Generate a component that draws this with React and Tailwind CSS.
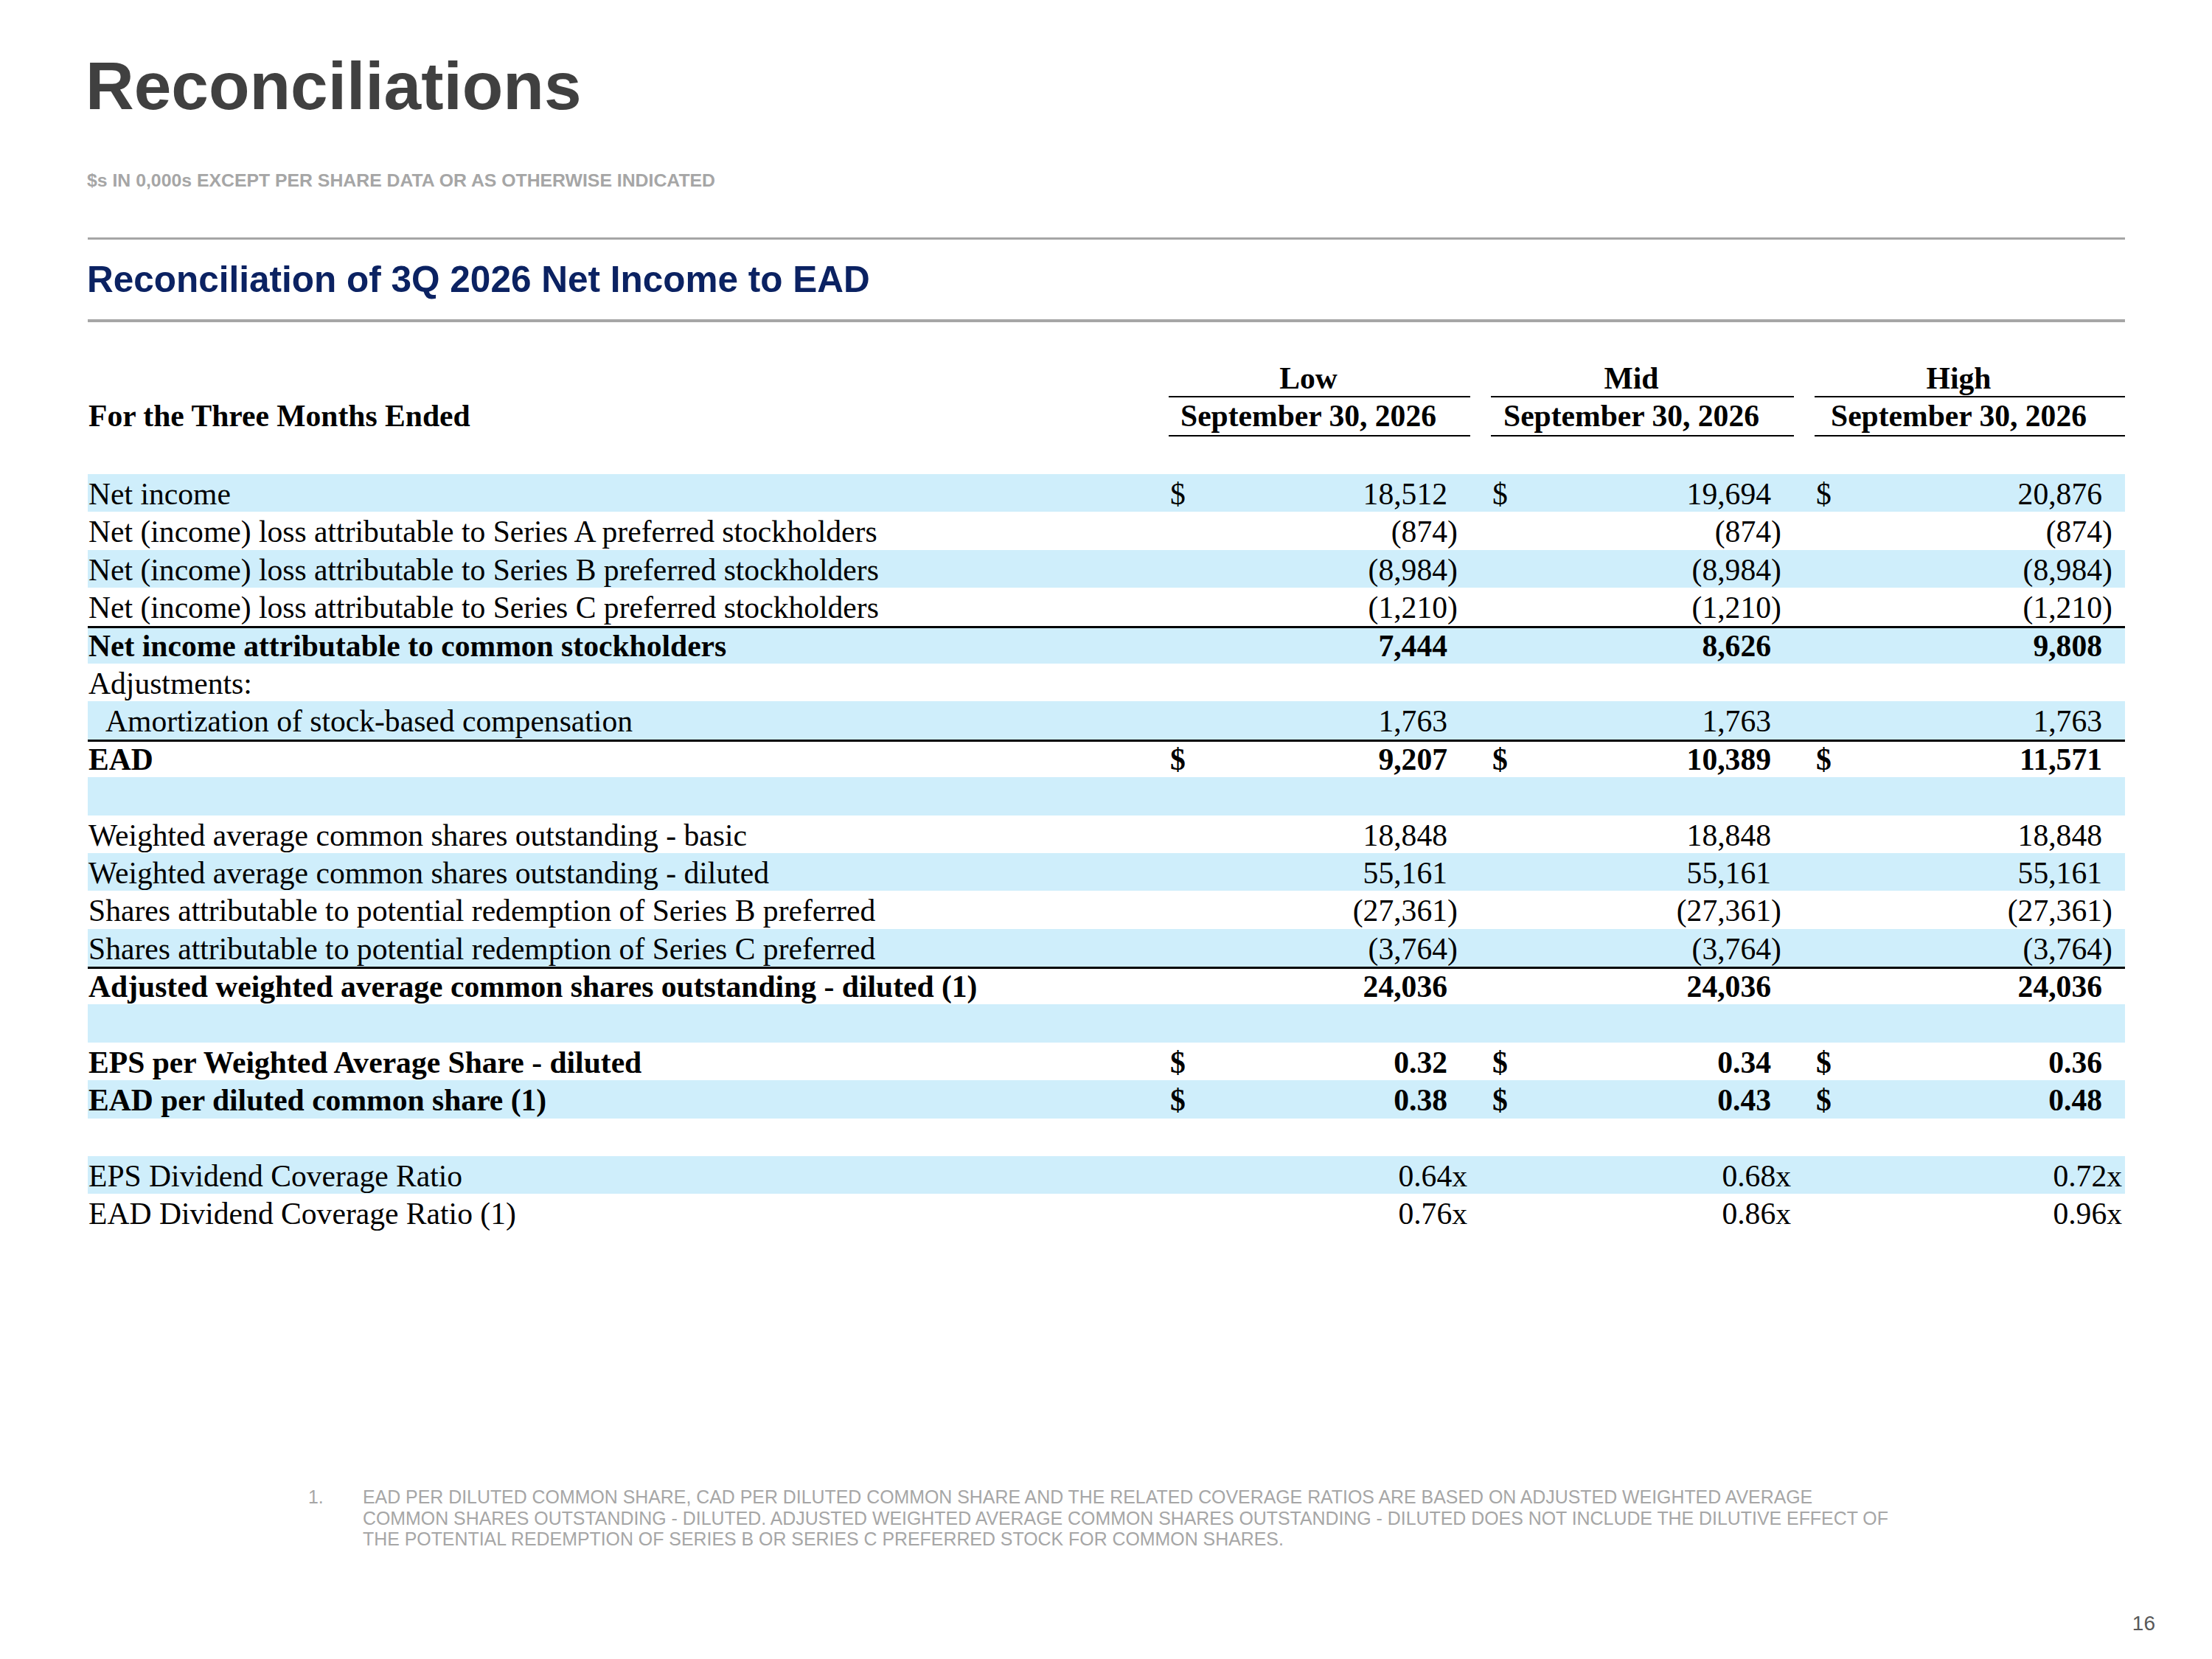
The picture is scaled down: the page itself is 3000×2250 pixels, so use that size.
import React from 'react';

const serif = { fontFamily: '"Liberation Serif", "Times New Roman", serif' };

const rows = [
  { label: 'Net income', shade: true, dollar: true, v: ['18,512', '19,694', '20,876'] },
  { label: 'Net (income) loss attributable to Series A preferred stockholders', v: ['(874)', '(874)', '(874)'] },
  { label: 'Net (income) loss attributable to Series B preferred stockholders', shade: true, v: ['(8,984)', '(8,984)', '(8,984)'] },
  { label: 'Net (income) loss attributable to Series C preferred stockholders', v: ['(1,210)', '(1,210)', '(1,210)'] },
  { label: 'Net income attributable to common stockholders', shade: true, bold: true, line: true, v: ['7,444', '8,626', '9,808'] },
  { label: 'Adjustments:', v: [] },
  { label: 'Amortization of stock-based compensation', shade: true, indent: true, v: ['1,763', '1,763', '1,763'] },
  { label: 'EAD', bold: true, dollar: true, line: true, v: ['9,207', '10,389', '11,571'] },
  { label: '', shade: true, v: [] },
  { label: 'Weighted average common shares outstanding - basic', v: ['18,848', '18,848', '18,848'] },
  { label: 'Weighted average common shares outstanding - diluted', shade: true, v: ['55,161', '55,161', '55,161'] },
  { label: 'Shares attributable to potential redemption of Series B preferred', v: ['(27,361)', '(27,361)', '(27,361)'] },
  { label: 'Shares attributable to potential redemption of Series C preferred', shade: true, v: ['(3,764)', '(3,764)', '(3,764)'] },
  { label: 'Adjusted weighted average common shares outstanding - diluted (1)', bold: true, line: true, v: ['24,036', '24,036', '24,036'] },
  { label: '', shade: true, v: [] },
  { label: 'EPS per Weighted Average Share - diluted', bold: true, dollar: true, v: ['0.32', '0.34', '0.36'] },
  { label: 'EAD per diluted common share (1)', bold: true, dollar: true, shade: true, v: ['0.38', '0.43', '0.48'] },
  { label: '', v: [] },
  { label: 'EPS Dividend Coverage Ratio', shade: true, ratio: true, v: ['0.64x', '0.68x', '0.72x'] },
  { label: 'EAD Dividend Coverage Ratio (1)', ratio: true, v: ['0.76x', '0.86x', '0.96x'] },
];

const gridCols = 'grid grid-cols-[1466px_409px_28px_411px_28px_421px]';

const ValueCell = ({ value, dollar, ratio }) => {
  if (value === undefined) return <div />;
  if (ratio) {
    return <div className="text-right pr-[4px]">{value}</div>;
  }
  const neg = value.startsWith('(');
  const num = neg ? value.slice(0, -1) : value;
  return (
    <div className="flex justify-between pl-[2px] pr-[16px]">
      <span>{dollar ? '$' : ''}</span>
      <span>
        {num}
        <span className="inline-block w-[15px]">{neg ? ')' : ''}</span>
      </span>
    </div>
  );
};

const Row = ({ row }) => (
  <div
    className={`${gridCols} h-[51.4px] leading-[54px] whitespace-nowrap ${row.shade ? 'bg-[#cfeefb]' : ''} ${row.line ? 'shadow-[inset_0_3px_0_0_#000]' : ''} ${row.bold ? 'font-bold' : ''}`}
  >
    <div className={row.indent ? 'pl-[24px]' : 'pl-[1px]'}>{row.label}</div>
    <ValueCell value={row.v[0]} dollar={row.dollar} ratio={row.ratio} />
    <div />
    <ValueCell value={row.v[1]} dollar={row.dollar} ratio={row.ratio} />
    <div />
    <ValueCell value={row.v[2]} dollar={row.dollar} ratio={row.ratio} />
  </div>
);

export default function App() {
  return (
    <div
      className="w-[3000px] h-[2250px] bg-white flex flex-col pl-[116px] pr-[118px]"
      style={{ fontFamily: '"Liberation Sans", Arial, sans-serif' }}
    >
      <h1 className="mt-[71px] text-[91px] leading-[91px] font-bold text-[#404040]">Reconciliations</h1>
      <div className="mt-[70px] text-[24.8px] leading-[25px] font-bold text-[#a6a6a6] pl-[2px]">
        $s IN 0,000s EXCEPT PER SHARE DATA OR AS OTHERWISE INDICATED
      </div>
      <div className="mt-[65px] ml-[3px] h-[3px] bg-[#a6a6a6]" />
      <h2 className="mt-[29px] text-[49.5px] leading-[49px] font-bold text-[#0b2262] pl-[2px]">
        Reconciliation of 3Q 2026 Net Income to EAD
      </h2>
      <div className="mt-[30px] ml-[3px] h-[4px] bg-[#a6a6a6]" />

      <div className="ml-[3px] text-[41.6px] text-black" style={serif}>
        <div className={`${gridCols} mt-[52px] h-[50px] leading-[48px] font-bold whitespace-nowrap`}>
          <div />
          <div className="border-b-2 border-black text-center pr-[30px]">Low</div>
          <div />
          <div className="border-b-2 border-black text-center pr-[30px]">Mid</div>
          <div />
          <div className="border-b-2 border-black text-center pr-[30px]">High</div>
        </div>
        <div className={`${gridCols} h-[53px] leading-[51px] font-bold whitespace-nowrap`}>
          <div className="pl-[1px]">For the Three Months Ended</div>
          <div className="border-b-2 border-black text-center pr-[30px]">September 30, 2026</div>
          <div />
          <div className="border-b-2 border-black text-center pr-[30px]">September 30, 2026</div>
          <div />
          <div className="border-b-2 border-black text-center pr-[30px]">September 30, 2026</div>
        </div>
        <div className="mt-[51px]">
          {rows.map((row, i) => (
            <Row key={i} row={row} />
          ))}
        </div>
      </div>

      <div className="mt-[345px] flex text-[24.9px] leading-[28.7px] text-[#a6a6a6]">
        <div className="w-[74px] pl-[302px] box-content">1.</div>
        <div className="flex flex-col whitespace-nowrap">
          <span>EAD PER DILUTED COMMON SHARE, CAD PER DILUTED COMMON SHARE AND THE RELATED COVERAGE RATIOS ARE BASED ON ADJUSTED WEIGHTED AVERAGE</span>
          <span>COMMON SHARES OUTSTANDING - DILUTED. ADJUSTED WEIGHTED AVERAGE COMMON SHARES OUTSTANDING - DILUTED DOES NOT INCLUDE THE DILUTIVE EFFECT OF</span>
          <span>THE POTENTIAL REDEMPTION OF SERIES B OR SERIES C PREFERRED STOCK FOR COMMON SHARES.</span>
        </div>
      </div>

      <div className="mt-[86px] self-end -mr-[41px] text-[28px] leading-[28px] text-[#595959]">16</div>
    </div>
  );
}
